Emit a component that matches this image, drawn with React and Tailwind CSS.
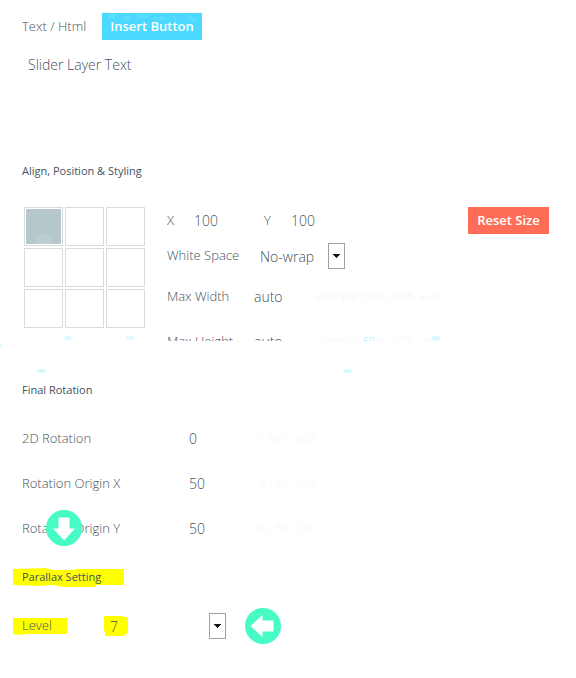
import React from "react";

const labelText = "text-[13px] font-light text-[#46525c]";
const valueText = "bg-transparent text-[14px] font-light text-[#46525c] outline-none";
const hintText = "text-[11px] font-light whitespace-nowrap text-[#f6f6f6]";

function Heading({ children }) {
  return <h2 className="text-[11px] leading-5 font-normal text-[#46525e]">{children}</h2>;
}

function ArrowBox() {
  return (
    <span className="pointer-events-none absolute top-0 right-0 flex h-full w-[17px] items-center justify-center border border-[#a0a0a0] bg-white">
      <svg width="7" height="4" viewBox="0 0 7 4" shapeRendering="crispEdges" aria-hidden="true">
        <path d="M0 0H7V1H6V2H5V3H4V4H3V3H2V2H1V1H0Z" fill="#111" />
      </svg>
    </span>
  );
}

function SizeRow({ id, label, children }) {
  return (
    <div className="flex h-[27px] shrink-0 items-center">
      <label htmlFor={id} className={`w-[87px] shrink-0 ${labelText}`}>{label}</label>
      <input id={id} defaultValue="auto" className={`w-[61px] ${valueText}`} />
      <span className={hintText}>{children}</span>
    </div>
  );
}

function RotationRow({ id, label, value, hint, marker }) {
  return (
    <div className="flex h-[45px] items-center">
      <div className="relative flex h-[20px] w-[167px] shrink-0 items-center">
        <label htmlFor={id} className={labelText}>{label}</label>
        {marker}
      </div>
      <input id={id} defaultValue={value} className={`w-[68px] ${valueText}`} />
      <span className={hintText}>{hint}</span>
    </div>
  );
}

function ArrowBadge({ left }) {
  return (
    <svg width="36" height="36" viewBox="0 0 36 36" aria-hidden="true">
      <circle cx="18" cy="18" r="18" fill="#46fcc4" />
      <path
        d="M12.5 7.5H23.5V18.5H29L18 30.5L7 18.5H12.5Z"
        fill="#fff"
        transform={left ? "rotate(90 18 18)" : undefined}
      />
    </svg>
  );
}

function AlignGrid() {
  return (
    <div className="ml-[2px] grid shrink-0 grid-cols-3 gap-[2px] self-start" role="group" aria-label="Alignment">
      {Array.from({ length: 9 }, (_, i) => (
        <button key={i} type="button" aria-label={`Position ${i + 1}`} aria-pressed={i === 0} className="size-[39px] border border-[#d8dbdd] p-px">
          {i === 0 && (
            <svg className="block size-full" viewBox="0 0 35 35" preserveAspectRatio="none" aria-hidden="true">
              <rect width="35" height="35" rx="1" fill="#b5c7ca" />
              <path d="M9 35C10 27 14 25 19 25S27 28 27 35Z" fill="#bccdcf" />
            </svg>
          )}
        </button>
      ))}
    </div>
  );
}

export default function App() {
  return (
    <main className="min-h-screen bg-white px-[22px] pt-[13px] pb-8 font-['Open_Sans',sans-serif]">
      <div className="flex items-center gap-[13px]">
        <label htmlFor="layer-text" className={`w-[67px] shrink-0 ${labelText}`}>Text / Html</label>
        <button type="button" className="relative h-[27px] w-[100px] overflow-hidden bg-[#4bd9ff] text-[13px] font-semibold whitespace-nowrap text-white">
          <svg className="absolute top-0 left-0" width="100" height="10" viewBox="0 0 100 10" aria-hidden="true">
            <path d="M7 1H16L13 5H7ZM21 4L28 2V7H22ZM34 2H48L44 5H34ZM51 4H62V7H53ZM69 2L76 5L73 8ZM83 4L88 2L97 9L89 7Z" fill="#5fdcff" />
          </svg>
          <span className="relative">Insert Button</span>
        </button>
      </div>

      <textarea
        id="layer-text"
        defaultValue="Slider Layer Text"
        className={`mt-[13px] block h-[88px] w-full resize-none overflow-hidden px-[6px] py-0 leading-6 ${valueText}`}
      />

      <section className="mt-[20px]">
        <Heading>Align, Position &amp; Styling</Heading>
        <div className="relative mt-[26px]">
          <div className="flex h-[134px] overflow-hidden">
            <AlignGrid />
            <div className="ml-[22px] flex min-w-0 flex-1 flex-col">
              <div className="flex h-[27px] shrink-0 items-center">
                <label htmlFor="pos-x" className={`w-[27px] ${labelText}`}>X</label>
                <input id="pos-x" defaultValue="100" className={`w-[70px] ${valueText}`} />
                <label htmlFor="pos-y" className={`w-[27px] ${labelText}`}>Y</label>
                <input id="pos-y" defaultValue="100" className={`w-[70px] ${valueText}`} />
                <button type="button" className="mr-[5px] ml-auto h-[27px] w-[81px] bg-[#ff6c58] text-[13px] font-semibold whitespace-nowrap text-white">
                  Reset Size
                </button>
              </div>
              <div className="mt-[9px] mb-[14px] flex h-[26px] shrink-0 items-center">
                <label htmlFor="white-space" className={`w-[87px] shrink-0 ${labelText}`}>White Space</label>
                <div className="relative h-[26px] w-[91px]">
                  <select id="white-space" defaultValue="No-wrap" className={`h-full w-full appearance-none pl-[6px] ${valueText}`}>
                    <option>No-wrap</option>
                    <option>Normal</option>
                  </select>
                  <ArrowBox />
                </div>
              </div>
              <SizeRow id="max-width" label="Max Width">example: 50px, 50%, auto</SizeRow>
              <div className="mt-[18px]">
                <SizeRow id="max-height" label="Max Height">
                  example: <span className="text-[#9de8fa]">50</span>px, 50%, <span className="text-[#d5f7ff]">auto</span>
                </SizeRow>
              </div>
            </div>
          </div>
          <svg className="pointer-events-none absolute top-[128px] -left-[22px]" width="460" height="42" viewBox="0 0 460 42" aria-hidden="true">
            <path d="M64 1H71V5H65ZM126 1H134V4L127 5ZM432 1H440V5H433ZM0 9H3L1 12H0ZM38 34H45V38H38ZM344 34H351V38H344Z" fill="#dcfcff" />
            <path d="M37 36H46M343 36H352M433 4H439" stroke="#c2f7ff" />
          </svg>
        </div>
      </section>

      <section className="mt-[39px]">
        <Heading>Final Rotation</Heading>
        <div className="mt-[16px]">
          <RotationRow id="rotation" label="2D Rotation" value="0" hint={"\u00a0(-360 - 360)"} />
          <RotationRow id="origin-x" label="Rotation Origin X" value="50" hint="% - 50 - 200" />
          <RotationRow
            id="origin-y"
            label="Rotation Origin Y"
            value="50"
            hint="% - 50 - 200"
            marker={<span className="absolute -top-[9px] left-[24px]"><ArrowBadge /></span>}
          />
        </div>
      </section>

      <section className="mt-[16px]">
        <div className="relative isolate">
          <svg className="absolute top-px -left-[9px] -z-10" width="111" height="20" viewBox="0 0 111 20" aria-hidden="true">
            <path d="M0 1L32 0L40 2H60L64 1H111V17H83V19H51L40 17L24 18L0 17Z" fill="#ff0" />
          </svg>
          <Heading>Parallax Setting</Heading>
        </div>
        <div className="relative isolate mt-[21px] flex h-[36px] items-center">
          <svg className="absolute top-[7px] -left-[9px] -z-10" width="116" height="22" viewBox="0 0 116 22" aria-hidden="true">
            <path d="M0 3H54V19H12L9 20L0 19ZM91 1H109L115 3V18L110 21H92V17L91 15Z" fill="#ff0" />
          </svg>
          <label htmlFor="level" className={`w-[82px] shrink-0 ${labelText}`}>Level</label>
          <div className="relative h-[26px] w-[122px]">
            <select id="level" defaultValue="7" className={`h-full w-full appearance-none pl-[6px] ${valueText}`}>
              <option>6</option>
              <option>7</option>
              <option>8</option>
            </select>
            <ArrowBox />
          </div>
          <span className="ml-[19px]"><ArrowBadge left /></span>
        </div>
      </section>
    </main>
  );
}
